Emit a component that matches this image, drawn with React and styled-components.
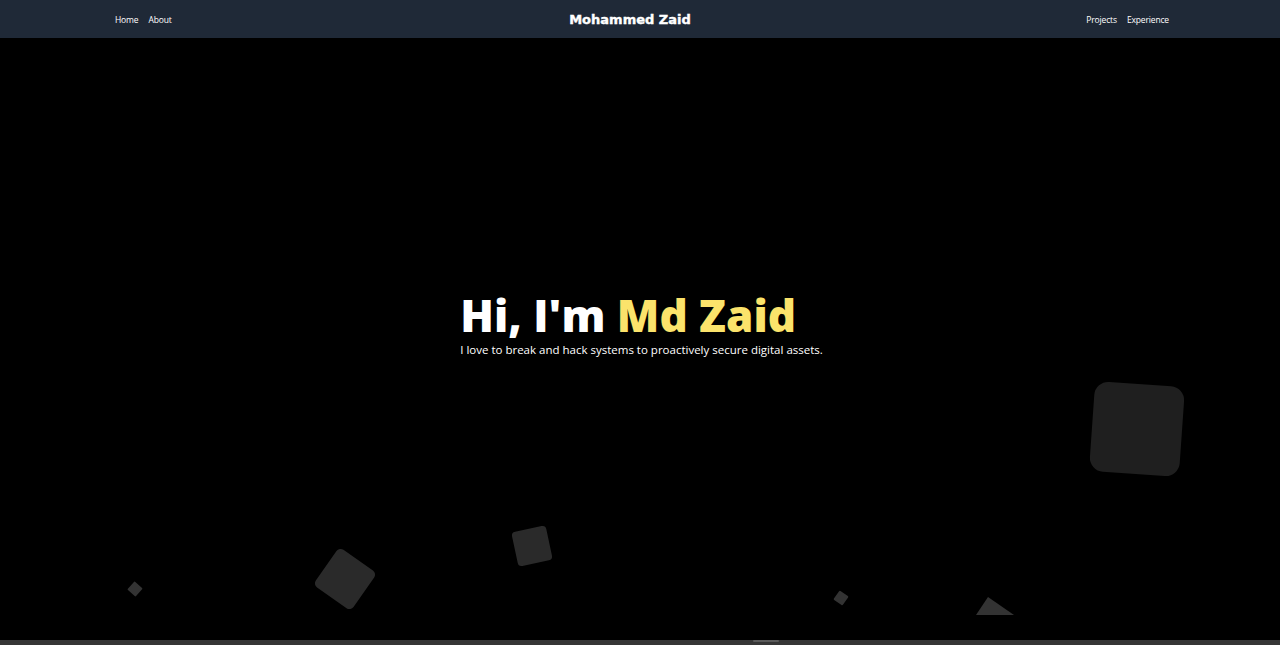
import React from "react";
import styled, { createGlobalStyle } from "styled-components";

const Global = createGlobalStyle`
  html, body { margin: 0; padding: 0; background: #000; }
  body { font-family: "Open Sans", "Noto Sans", sans-serif; overflow: hidden; }
  * { box-sizing: border-box; }
`;

const Page = styled.div`
  display: flex;
  flex-direction: column;
  width: 1280px;
  height: 645px;
  background: #000;
`;

const Nav = styled.nav`
  display: grid;
  grid-template-columns: 1fr auto 1fr;
  align-items: center;
  height: 38px;
  padding: 0 111px 0 115px;
  background: #1f2937;
  flex-shrink: 0;
`;

const NavGroup = styled.div`
  display: flex;
  gap: 10px;
  justify-content: ${(p) => (p.$end ? "flex-end" : "flex-start")};
`;

const NavLink = styled.a`
  color: #fff;
  font-family: "Open Sans", sans-serif;
  font-size: 8.5px;
  text-decoration: none;
  letter-spacing: -0.15px;
`;

const Brand = styled.div`
  color: #fff;
  font-family: "DejaVu Sans", sans-serif;
  font-weight: 700;
  font-size: 13px;
  margin-left: -24px;
  -webkit-text-stroke: 0.4px #fff;
`;

const Hero = styled.section`
  position: relative;
  flex: 1;
  display: flex;
  align-items: center;
  justify-content: center;
  padding-bottom: 25px;
`;

const ShapeLayer = styled.div`
  position: absolute;
  left: 0;
  top: 0;
  right: 0;
  bottom: 25px;
  overflow: hidden;
  pointer-events: none;
`;

const Square = styled.div`
  position: absolute;
  width: ${(p) => p.$size}px;
  height: ${(p) => p.$size}px;
  border-radius: ${(p) => p.$radius}px;
  background: ${(p) => p.$color};
  transform: translate(-50%, -50%) rotate(${(p) => p.$rot}deg);
`;

const Triangle = styled.div`
  position: absolute;
  width: 0;
  height: 0;
  border-left: 12px solid transparent;
  border-right: 26px solid transparent;
  border-bottom: 18px solid #333;
`;

const Intro = styled.div`
  position: relative;
  display: flex;
  flex-direction: column;
  align-items: flex-start;
  margin-left: 3px;
  margin-top: -4px;
`;

const Heading = styled.h1`
  margin: 0;
  color: #fff;
  font-family: "Open Sans", sans-serif;
  font-weight: 800;
  font-size: 44px;
  line-height: 44px;
`;

const Accent = styled.span`
  color: #fbe36b;
`;

const Tagline = styled.p`
  margin: 5px 0 0;
  color: #fff;
  font-family: "Open Sans", sans-serif;
  font-size: 11.5px;
  line-height: 15px;
`;

const Next = styled.div`
  display: flex;
  height: 5px;
  padding-left: 753px;
  background: #363636;
  flex-shrink: 0;
`;

const Thumb = styled.div`
  width: 26px;
  height: 2px;
  border-radius: 1px;
  background: #5a5a5a;
`;

const shapes = [
  { x: 1137, y: 391, size: 90, radius: 14, rot: 4, color: "#1f1f1f" },
  { x: 135, y: 551, size: 11, radius: 1, rot: 42, color: "#333" },
  { x: 345, y: 541, size: 46, radius: 5, rot: 35, color: "#2a2a2a" },
  { x: 532, y: 508, size: 35, radius: 4, rot: -12, color: "#2a2a2a" },
  { x: 841, y: 560, size: 11, radius: 1, rot: 35, color: "#333" },
];

export default function App() {
  return (
    <>
      <Global />
      <Page>
        <Nav>
          <NavGroup>
            <NavLink href="#">Home</NavLink>
            <NavLink href="#">About</NavLink>
          </NavGroup>
          <Brand>Mohammed Zaid</Brand>
          <NavGroup $end>
            <NavLink href="#">Projects</NavLink>
            <NavLink href="#">Experience</NavLink>
          </NavGroup>
        </Nav>
        <Hero>
          <ShapeLayer>
            {shapes.map((s, i) => (
              <Square
                key={i}
                style={{ left: s.x, top: s.y }}
                $size={s.size}
                $radius={s.radius}
                $rot={s.rot}
                $color={s.color}
              />
            ))}
            <Triangle style={{ left: 976, top: 559 }} />
          </ShapeLayer>
          <Intro>
            <Heading>
              Hi, I'm <Accent>Md Zaid</Accent>
            </Heading>
            <Tagline>
              I love to break and hack systems to proactively secure digital assets.
            </Tagline>
          </Intro>
        </Hero>
        <Next>
          <Thumb />
        </Next>
      </Page>
    </>
  );
}
